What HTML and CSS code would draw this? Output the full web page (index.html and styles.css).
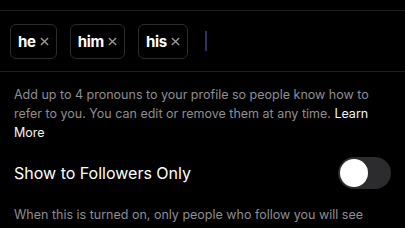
FILE: index.html
```html
<!DOCTYPE html>
<html lang="en">
  <head>
    <meta charset="UTF-8" />
    <title>Pronouns</title>
    <link rel="stylesheet" href="styles.css">
  </head>
  <body>
    <!-- Pronoun chips -->
    <div class="chip-row">
      <div class="chip">he<svg class="chip-x" viewBox="0 0 10 10"><path d="M1 1L9 9M9 1L1 9"/></svg></div>
      <div class="chip">him<svg class="chip-x" viewBox="0 0 10 10"><path d="M1 1L9 9M9 1L1 9"/></svg></div>
      <div class="chip">his<svg class="chip-x" viewBox="0 0 10 10"><path d="M1 1L9 9M9 1L1 9"/></svg></div>
      <div class="cursor"></div>
    </div>

    <p class="hint">
      Add up to 4 pronouns to your profile so people know how to refer to you.
      You can edit or remove them at any time. <span class="link">Learn More</span>
    </p>

    <!-- Followers toggle -->
    <div class="setting">
      <span class="setting-label">Show to Followers Only</span>
      <div class="toggle"><div class="knob"></div></div>
    </div>

    <p class="hint">
      When this is turned on, only people who follow you will see
    </p>
  </body>
</html>
```

FILE: styles.css
```css
body {
  margin: 0;
  background: #000;
  font-family: Inter, "Noto Sans", sans-serif;
  color: #fff;
}

.chip-row {
  display: flex;
  align-items: center;
  margin-top: 10px;
  height: 60px;
  padding: 0 10px;
  border-top: 1px solid #1f1f21;
  border-bottom: 1px solid #1f1f21;
}

.chip {
  display: flex;
  align-items: center;
  gap: 4px;
  height: 33px;
  padding: 0 7px 0 7px;
  margin-right: 13px;
  border: 1px solid #2c2c2e;
  border-radius: 6px;
  font-size: 15px;
  font-weight: 700;
  letter-spacing: -0.3px;
}

.chip-x {
  width: 9px;
  height: 9px;
  stroke: #9a9a9a;
  stroke-width: 1.5;
  fill: none;
}

.cursor {
  width: 2px;
  height: 20px;
  margin-left: 4px;
  background: #2c2f6a;
}

.hint {
  margin: 0;
  padding: 13px 14px 0;
  font-size: 12.5px;
  line-height: 19px;
  color: #8e8e93;
}

.link {
  color: #f5f5f5;
}

.setting {
  display: flex;
  align-items: center;
  justify-content: space-between;
  padding: 15px 14px 3px;
}

.setting-label {
  font-size: 16px;
}

.toggle {
  width: 53px;
  height: 32px;
  border-radius: 16px;
  background: #2c2c2e;
  position: relative;
}

.knob {
  position: absolute;
  top: 2px;
  left: 2px;
  width: 28px;
  height: 28px;
  border-radius: 50%;
  background: #fff;
}
```
